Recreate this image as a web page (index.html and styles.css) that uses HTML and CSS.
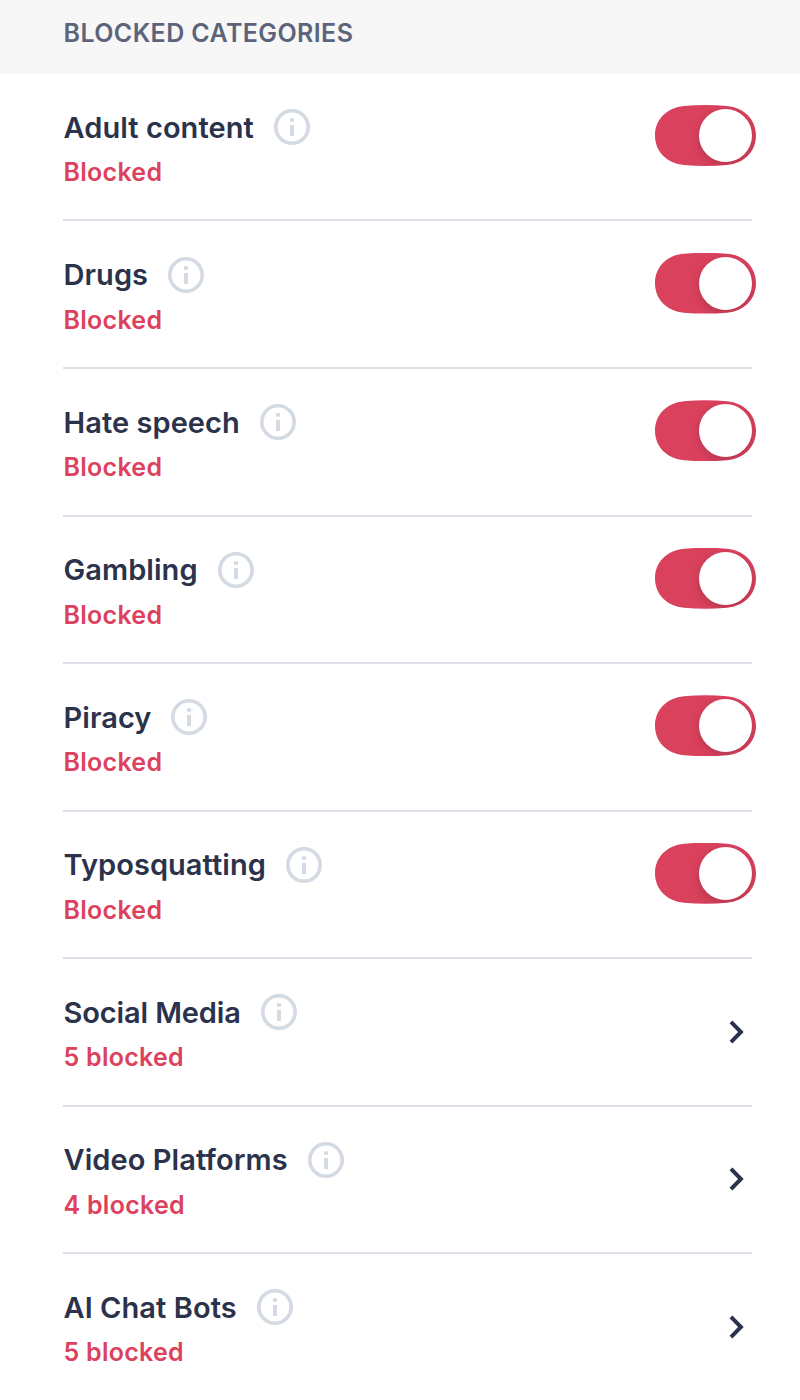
FILE: index.html
```
<!DOCTYPE html>
<html lang="en">
<head>
  <meta charset="UTF-8">
  <title>Blocked Categories</title>
  <link rel="stylesheet" href="styles.css">
</head>
<body>
  <svg width="0" height="0" class="sprites">
    <symbol id="info" viewBox="0 0 36 36">
      <circle cx="18" cy="18" r="16.2" fill="none" stroke="currentColor" stroke-width="3.6"/>
      <path d="M16 9.2h4v3.6h-4zM16 16h4v11h-4z" fill="currentColor"/>
    </symbol>
    <symbol id="chevron" viewBox="0 0 16 24">
      <path d="M2 1.9L11.9 12L2 22.1" fill="none" stroke="currentColor" stroke-width="4"/>
    </symbol>
  </svg>

  <h1 class="section-title">Blocked Categories</h1>
  <ul class="categories">
    <li class="category">
      <div>
        <div class="name">Adult content <svg class="info"><use href="#info"/></svg></div>
        <div class="status">Blocked</div>
      </div>
      <label class="toggle"><input type="checkbox" checked><span class="knob"></span></label>
    </li>
    <li class="category">
      <div>
        <div class="name">Drugs <svg class="info"><use href="#info"/></svg></div>
        <div class="status">Blocked</div>
      </div>
      <label class="toggle"><input type="checkbox" checked><span class="knob"></span></label>
    </li>
    <li class="category">
      <div>
        <div class="name">Hate speech <svg class="info"><use href="#info"/></svg></div>
        <div class="status">Blocked</div>
      </div>
      <label class="toggle"><input type="checkbox" checked><span class="knob"></span></label>
    </li>
    <li class="category">
      <div>
        <div class="name">Gambling <svg class="info"><use href="#info"/></svg></div>
        <div class="status">Blocked</div>
      </div>
      <label class="toggle"><input type="checkbox" checked><span class="knob"></span></label>
    </li>
    <li class="category">
      <div>
        <div class="name">Piracy <svg class="info"><use href="#info"/></svg></div>
        <div class="status">Blocked</div>
      </div>
      <label class="toggle"><input type="checkbox" checked><span class="knob"></span></label>
    </li>
    <li class="category">
      <div>
        <div class="name">Typosquatting <svg class="info"><use href="#info"/></svg></div>
        <div class="status">Blocked</div>
      </div>
      <label class="toggle"><input type="checkbox" checked><span class="knob"></span></label>
    </li>
    <li class="category">
      <div>
        <div class="name name-tight">Social Media <svg class="info"><use href="#info"/></svg></div>
        <div class="status">5 blocked</div>
      </div>
      <svg class="chevron"><use href="#chevron"/></svg>
    </li>
    <li class="category">
      <div>
        <div class="name">Video Platforms <svg class="info"><use href="#info"/></svg></div>
        <div class="status">4 blocked</div>
      </div>
      <svg class="chevron"><use href="#chevron"/></svg>
    </li>
    <li class="category">
      <div>
        <div class="name">AI Chat Bots <svg class="info"><use href="#info"/></svg></div>
        <div class="status">5 blocked</div>
      </div>
      <svg class="chevron"><use href="#chevron"/></svg>
    </li>
  </ul>
</body>
</html>
```
FILE: styles.css
```
body {
  margin: 0;
  height: 1400px;
  overflow: hidden;
  background-color: #fff;
  color: #2b324b;
  font-family: Inter, sans-serif;
  font-weight: 570;
}
.sprites {
  display: block;
}
.section-title {
  box-sizing: border-box;
  height: 73.9px;
  margin: 0;
  padding: 17px 63.5px 0;
  background-color: #f7f7f7;
  color: #5b647b;
  font-size: 25px;
  font-weight: 570;
  line-height: 32px;
  letter-spacing: 0.4px;
  text-transform: uppercase;
}
.categories {
  margin: 0;
  padding: 0 48px 0 63px;
  list-style: none;
}
.category {
  box-sizing: border-box;
  display: flex;
  justify-content: space-between;
  align-items: flex-start;
  height: 147.56px;
  padding-top: 33.2px;
  border-bottom: 2px solid #dde1e7;
}
.category:last-child {
  border-bottom: none;
}
.name {
  display: flex;
  align-items: center;
  gap: 20px;
  height: 40px;
  padding-left: 0.5px;
  font-size: 29px;
  letter-spacing: 0.06px;
}
.name-tight {
  letter-spacing: -0.12px;
}
.info {
  width: 36px;
  height: 36px;
  color: #d3dae2;
}
.status {
  margin-top: 8px;
  padding-left: 0.5px;
  color: #dc415e;
  font-size: 25px;
  line-height: 34px;
  letter-spacing: 0.27px;
}
.toggle {
  box-sizing: border-box;
  width: 101px;
  height: 61px;
  margin: -2px -4px 0 0;
  padding: 4px;
  display: flex;
  justify-content: flex-end;
  background-color: #da415d;
  /* pill with slightly bowed top and bottom edges */
  clip-path: path('M29 1C43 -0.3 58 -0.3 72 1C89 2.5 101 14.5 101 30.5C101 46.5 89 58.5 72 60C58 61.3 43 61.3 29 60C12 58.5 0 46.5 0 30.5C0 14.5 12 2.5 29 1Z');
  cursor: pointer;
}
.toggle input {
  display: none;
}
.knob {
  width: 53px;
  height: 53px;
  background-color: #fff;
  border-radius: 50%;
  box-shadow: 0 3px 10px rgba(0, 0, 0, 0.18);
}
.chevron {
  width: 16px;
  height: 24px;
  margin: 27.5px 7px 0 0;
}
```
